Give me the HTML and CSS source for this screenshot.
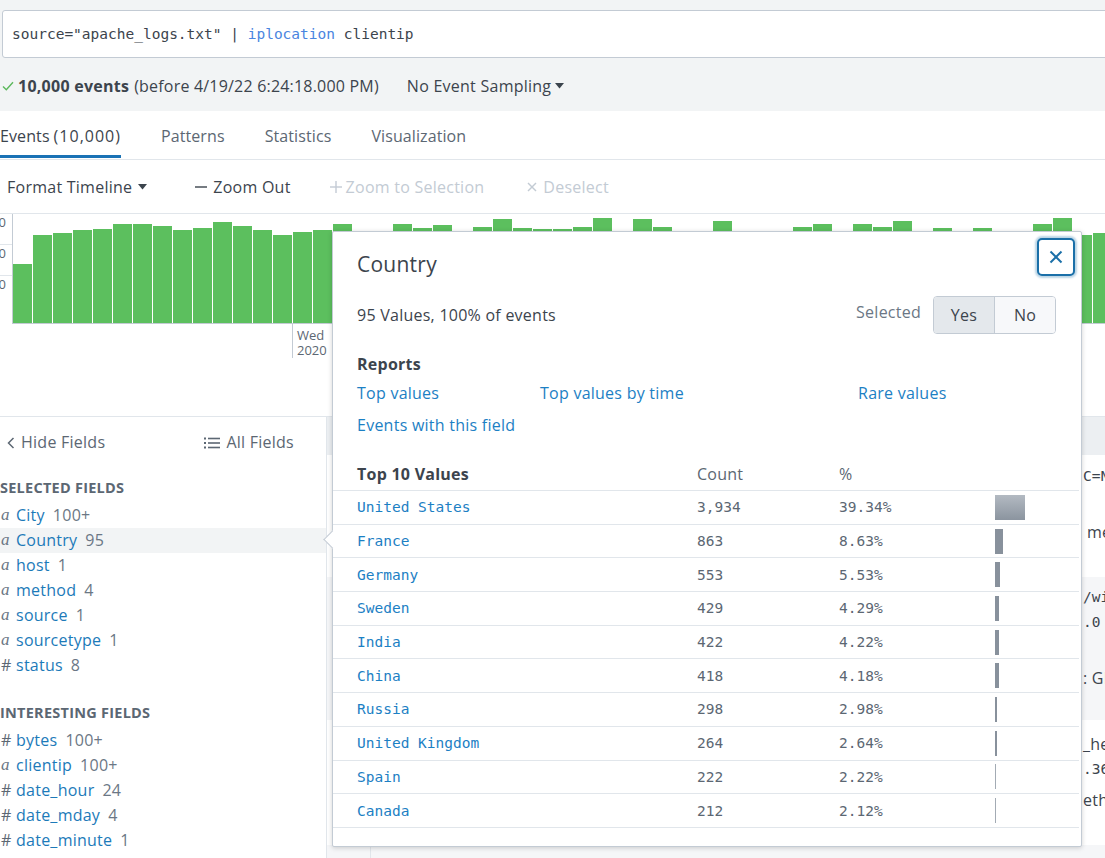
FILE: index.html
```html
<!DOCTYPE html>
<html>
<head>
<meta charset="utf-8">
<title>Search</title>
<link rel="stylesheet" href="styles.css">
</head>
<body>
<div class="top">
  <div class="search"><span>source="apache_logs.txt" | <span class="cmd">iplocation</span> clientip</span></div>
  <div class="status">
    <svg class="check" width="12" height="10" viewBox="0 0 12 10"><polyline points="1,5.5 4.3,8.8 11,1.2" fill="none" stroke="#5cb85c" stroke-width="1.4"/></svg>
    <b class="count">10,000 events</b><span class="before">(before 4/19/22 6:24:18.000 PM)</span>
    <span class="sampling">No Event Sampling <svg class="caret" width="9" height="6" viewBox="0 0 9 6"><polygon points="0,0 9,0 4.5,5.5" fill="#3c444d"/></svg></span>
  </div>
</div>

<div class="tabs">
  <div class="tab active">Events <span class="digits">(10,000)</span></div>
  <div class="tab">Patterns</div>
  <div class="tab">Statistics</div>
  <div class="tab">Visualization</div>
</div>

<div class="toolbar">
  <span class="tool fmt">Format Timeline <svg class="caret" width="9" height="6" viewBox="0 0 9 6"><polygon points="0,0 9,0 4.5,5.5" fill="#3c444d"/></svg></span>
  <span class="tool zoomout"><svg width="12" height="12" viewBox="0 0 12 12"><line x1="0" y1="6" x2="12" y2="6" stroke="#3c444d" stroke-width="1.4"/></svg>Zoom Out</span>
  <span class="tool disabled zoomsel"><svg width="12" height="12" viewBox="0 0 12 12"><line x1="0" y1="6" x2="12" y2="6" stroke="#c3cbd4" stroke-width="1.4"/><line x1="6" y1="0" x2="6" y2="12" stroke="#c3cbd4" stroke-width="1.4"/></svg>Zoom to Selection</span>
  <span class="tool disabled desel"><svg width="10" height="10" viewBox="0 0 10 10"><line x1="1" y1="1" x2="9" y2="9" stroke="#c3cbd4" stroke-width="1.4"/><line x1="9" y1="1" x2="1" y2="9" stroke="#c3cbd4" stroke-width="1.4"/></svg>Deselect</span>
</div>

<div class="timeline">
  <div class="chart">
    <div class="yaxis">
      <div class="ylab first"><span>600</span></div>
      <div class="ylab"><span>400</span></div>
      <div class="ylab"><span>200</span></div>
    </div>
    <div class="plot">
      <div class="bar" style="height:59px"></div><div class="bar" style="height:88px"></div><div class="bar" style="height:90px"></div><div class="bar" style="height:93px"></div><div class="bar" style="height:94px"></div><div class="bar" style="height:99px"></div><div class="bar" style="height:99px"></div><div class="bar" style="height:97px"></div><div class="bar" style="height:93px"></div><div class="bar" style="height:95px"></div><div class="bar" style="height:101px"></div><div class="bar" style="height:97px"></div><div class="bar" style="height:93px"></div><div class="bar" style="height:88px"></div><div class="bar" style="height:91px"></div><div class="bar" style="height:93px"></div><div class="bar" style="height:99px"></div><div class="bar" style="height:88px"></div><div class="bar" style="height:90px"></div><div class="bar" style="height:99px"></div><div class="bar" style="height:95px"></div><div class="bar" style="height:98px"></div><div class="bar" style="height:90px"></div><div class="bar" style="height:96px"></div><div class="bar" style="height:104px"></div><div class="bar" style="height:95px"></div><div class="bar" style="height:94px"></div><div class="bar" style="height:94px"></div><div class="bar" style="height:96px"></div><div class="bar" style="height:105px"></div><div class="bar" style="height:90px"></div><div class="bar" style="height:104px"></div><div class="bar" style="height:96px"></div><div class="bar" style="height:90px"></div><div class="bar" style="height:91px"></div><div class="bar" style="height:102px"></div><div class="bar" style="height:90px"></div><div class="bar" style="height:89px"></div><div class="bar" style="height:91px"></div><div class="bar" style="height:96px"></div><div class="bar" style="height:99px"></div><div class="bar" style="height:90px"></div><div class="bar" style="height:99px"></div><div class="bar" style="height:96px"></div><div class="bar" style="height:102px"></div><div class="bar" style="height:90px"></div><div class="bar" style="height:95px"></div><div class="bar" style="height:91px"></div><div class="bar" style="height:95px"></div><div class="bar" style="height:89px"></div><div class="bar" style="height:90px"></div><div class="bar" style="height:99px"></div><div class="bar" style="height:105px"></div><div class="bar" style="height:88px"></div><div class="bar" style="height:90px"></div>
    </div>
  </div>
  <div class="xaxis"><div class="xlabel">Wed<br>2020</div></div>
</div>

<div class="main">
  <aside class="sidebar">
    <div class="sb-head">
      <span class="sb-link"><svg width="8" height="12" viewBox="0 0 8 12"><polyline points="6.5,1 1.5,6 6.5,11" fill="none" stroke="#5c6773" stroke-width="1.5"/></svg>Hide Fields</span>
      <span class="sb-link"><svg width="16" height="12" viewBox="0 0 16 12"><rect x="0" y="0.5" width="2" height="2" fill="#5c6773"/><rect x="0" y="5" width="2" height="2" fill="#5c6773"/><rect x="0" y="9.5" width="2" height="2" fill="#5c6773"/><rect x="4" y="0.7" width="12" height="1.6" fill="#5c6773"/><rect x="4" y="5.2" width="12" height="1.6" fill="#5c6773"/><rect x="4" y="9.7" width="12" height="1.6" fill="#5c6773"/></svg>All Fields</span>
    </div>
    <div class="sb-title">SELECTED FIELDS</div>
    <div class="field"><span class="ftype">a</span><span class="fname">City</span><span class="fcount">100+</span></div>
    <div class="field active"><span class="ftype">a</span><span class="fname">Country</span><span class="fcount">95</span></div>
    <div class="field"><span class="ftype">a</span><span class="fname">host</span><span class="fcount">1</span></div>
    <div class="field"><span class="ftype">a</span><span class="fname">method</span><span class="fcount">4</span></div>
    <div class="field"><span class="ftype">a</span><span class="fname">source</span><span class="fcount">1</span></div>
    <div class="field"><span class="ftype">a</span><span class="fname">sourcetype</span><span class="fcount">1</span></div>
    <div class="field"><span class="ftype num">#</span><span class="fname">status</span><span class="fcount">8</span></div>
    <div class="sb-title second">INTERESTING FIELDS</div>
    <div class="field"><span class="ftype num">#</span><span class="fname">bytes</span><span class="fcount">100+</span></div>
    <div class="field"><span class="ftype">a</span><span class="fname">clientip</span><span class="fcount">100+</span></div>
    <div class="field"><span class="ftype num">#</span><span class="fname">date_hour</span><span class="fcount">24</span></div>
    <div class="field"><span class="ftype num">#</span><span class="fname">date_mday</span><span class="fcount">4</span></div>
    <div class="field"><span class="ftype num">#</span><span class="fname">date_minute</span><span class="fcount">1</span></div>
  </aside>
  <section class="events">
    <div class="ev-head"></div>
    <div class="evrow r1"><div class="evidx"></div><div class="evbody"><div class="evline mono">C=Nav&amp;PD=2</div><div class="evline gap31 indent">method = GET</div></div></div>
    <div class="evrow r2 alt"><div class="evidx"></div><div class="evbody"><div class="evline mono">/wiki/index.php</div><div class="evline mono">.0 (Windows NT)</div><div class="evline gap31">: GET</div></div></div>
    <div class="evrow r3"><div class="evidx"></div><div class="evbody"><div class="evline">_header</div><div class="evline mono">.36 Safari</div><div class="evline gap6">ethernet</div></div></div>
    <div class="evrow r4 alt"><div class="evidx"></div><div class="evbody"></div></div>
  </section>
</div>

<div class="popup">
  <div class="arrow"></div>
  <button class="close"><svg width="14" height="14" viewBox="0 0 14 14"><line x1="1.5" y1="1.5" x2="12.5" y2="12.5" stroke="#1a6fa8" stroke-width="2"/><line x1="12.5" y1="1.5" x2="1.5" y2="12.5" stroke="#1a6fa8" stroke-width="2"/></svg></button>
  <div class="pop-title">Country</div>
  <div class="pop-meta">
    <span>95 Values, 100% of events</span>
    <span class="selected"><span class="sel-label">Selected</span><span class="toggle"><span class="tbtn on">Yes</span><span class="tbtn">No</span></span></span>
  </div>
  <div class="reports-title">Reports</div>
  <div class="reports">
    <span class="link">Top values</span><span class="link">Top values by time</span><span class="link">Rare values</span>
    <span class="link">Events with this field</span>
  </div>
  <div class="vtable">
    <div class="trow thead"><span class="c1">Top 10 Values</span><span class="c2">Count</span><span class="c3">%</span><span></span></div>
    <div class="trow"><span class="c1 val">United States</span><span class="c2 num">3,934</span><span class="c3 num">39.34%</span><span class="c4"><span class="pbar wide" style="width:30px"></span></span></div>
    <div class="trow"><span class="c1 val">France</span><span class="c2 num">863</span><span class="c3 num">8.63%</span><span class="c4"><span class="pbar" style="width:8px"></span></span></div>
    <div class="trow"><span class="c1 val">Germany</span><span class="c2 num">553</span><span class="c3 num">5.53%</span><span class="c4"><span class="pbar" style="width:5px"></span></span></div>
    <div class="trow"><span class="c1 val">Sweden</span><span class="c2 num">429</span><span class="c3 num">4.29%</span><span class="c4"><span class="pbar" style="width:4px"></span></span></div>
    <div class="trow"><span class="c1 val">India</span><span class="c2 num">422</span><span class="c3 num">4.22%</span><span class="c4"><span class="pbar" style="width:4px"></span></span></div>
    <div class="trow"><span class="c1 val">China</span><span class="c2 num">418</span><span class="c3 num">4.18%</span><span class="c4"><span class="pbar" style="width:4px"></span></span></div>
    <div class="trow"><span class="c1 val">Russia</span><span class="c2 num">298</span><span class="c3 num">2.98%</span><span class="c4"><span class="pbar" style="width:2px"></span></span></div>
    <div class="trow"><span class="c1 val">United Kingdom</span><span class="c2 num">264</span><span class="c3 num">2.64%</span><span class="c4"><span class="pbar" style="width:2px"></span></span></div>
    <div class="trow"><span class="c1 val">Spain</span><span class="c2 num">222</span><span class="c3 num">2.22%</span><span class="c4"><span class="pbar thin" style="width:1px"></span></span></div>
    <div class="trow"><span class="c1 val">Canada</span><span class="c2 num">212</span><span class="c3 num">2.12%</span><span class="c4"><span class="pbar thin" style="width:1px"></span></span></div>
  </div>
</div>
</body>
</html>
```

FILE: styles.css
```css
* { box-sizing: border-box; }
html, body { overflow: hidden; }
body {
  margin: 0;
  width: 1105px;
  height: 858px;
  position: relative;
  font-family: "Open Sans", "Noto Sans", sans-serif;
  font-size: 16px;
  letter-spacing: 0.25px;
  color: #3c444d;
  background: #fff;
}

/* top search area */
.top {
  background: #f2f4f5;
  height: 111px;
  padding: 10px 0 0 2px;
}
.search {
  height: 48px;
  margin-right: -6px;
  background: #fff;
  border: 1px solid #c3cbd4;
  border-radius: 3px;
  display: flex;
  align-items: center;
  padding-left: 9px;
  font-family: "DejaVu Sans Mono", "Liberation Mono", monospace;
  font-size: 14.5px;
  letter-spacing: 0;
  color: #3c444d;
  white-space: nowrap;
}
.cmd { color: #4a85e0; }

.status {
  height: 53px;
  margin-left: -2px;
  display: flex;
  align-items: center;
  padding-top: 2px;
  white-space: nowrap;
}
.check { margin: 0 4px 0 2px; }
.count { font-weight: 700; margin-right: 5px; }
.before { letter-spacing: 0.2px; }
.sampling { margin-left: 28px; display: inline-flex; align-items: center; gap: 4px; }
.caret { margin-top: 1px; }

/* tabs */
.tabs {
  display: flex;
  gap: 40px;
  height: 49px;
  border-bottom: 1px solid #e1e6eb;
  align-items: flex-start;
  letter-spacing: 0.1px;
}
.tab {
  height: 47px;
  padding-top: 6px;
  display: flex;
  align-items: center;
  border-bottom: 3px solid transparent;
  color: #5c6773;
  white-space: nowrap;
}
.tab.active { border-bottom-color: #1a72b5; color: #3c444d; gap: 4px; }
.digits { letter-spacing: 1px; }

/* timeline toolbar */
.toolbar {
  height: 53px;
  display: flex;
  align-items: center;
  padding-left: 7px;
  white-space: nowrap;
}
.tool { display: inline-flex; align-items: center; gap: 6px; }
.tool.fmt { margin-right: 48px; }
.tool.zoomout { margin-right: 39px; }
.tool.zoomsel { gap: 4px; margin-right: 43px; }
.tool.desel { gap: 6px; }
.tool.disabled { color: #c3cbd4; }

/* chart */
.timeline { height: 203px; }
.chart {
  height: 111px;
  display: flex;
  border-top: 1px solid #e1e6eb;
}
.yaxis {
  width: 12px;
  overflow: hidden;
  display: flex;
  flex-direction: column;
}
.ylab {
  height: 31px;
  border-top: 1px solid #e1e6eb;
  font-size: 13px;
  line-height: 16px;
  display: flex;
  justify-content: flex-end;
  padding-right: 6px;
  color: #5c6773;
  white-space: nowrap;
  letter-spacing: 0;
}
.ylab span { flex: none; }
.ylab.first { height: 30px; border-top: none; }
.plot {
  flex: 1;
  display: flex;
  align-items: flex-end;
  gap: 1px;
  border-left: 1px solid #c3cbd4;
  border-bottom: 1px solid #c3cbd4;
  overflow: hidden;
}
.bar { flex: 0 0 19px; background: #5cbf5e; }
.xaxis { height: 92px; }
.xlabel {
  margin-left: 292px;
  width: 60px;
  border-left: 1px solid #c3cbd4;
  padding: 4px 0 0 4px;
  font-size: 13px;
  line-height: 15px;
  letter-spacing: 0;
  color: #5c6773;
}

/* main area */
.main {
  display: flex;
  border-top: 1px solid #e1e6eb;
  height: 442px;
}
.sidebar {
  width: 327px;
  flex: 0 0 327px;
  border-right: 1px solid #e1e6eb;
}
.sb-head {
  height: 50px;
  display: flex;
  align-items: center;
  justify-content: space-between;
  padding: 0 32px 0 7px;
  color: #5c6773;
}
.sb-link { display: inline-flex; align-items: center; gap: 6px; }
.sb-link svg { margin-top: 1px; }
.sb-title {
  font-size: 14.5px;
  font-weight: 700;
  line-height: 20px;
  color: #5c6773;
  margin: 11px 0 4.5px 0;
}
.sb-title.second { margin-top: 25.5px; }
.field {
  height: 25px;
  display: flex;
  align-items: center;
  padding-left: 1px;
  white-space: nowrap;
}
.field.active { background: #f2f4f5; }
.ftype {
  width: 15px;
  font-family: "Liberation Serif", serif;
  font-style: italic;
  font-size: 17px;
  color: #6b7785;
}
.ftype.num { font-family: "Open Sans", sans-serif; font-style: normal; font-size: 16px; }
.fname { color: #1c7ab9; }
.fcount { margin-left: 8px; color: #6b7785; }

.events { flex: 1; }
.ev-head { height: 38px; background: #eceff2; }
.evrow { display: flex; }
.evrow.alt { background: #f5f6f8; }
.evrow.r1 { height: 122px; }
.evrow.r2 { height: 143px; }
.evrow.r3 { height: 125px; }
.evrow.r4 { height: 20px; }
.evidx { width: 44px; flex: 0 0 44px; border-right: 1px solid #e1e6eb; }
.evbody { flex: 1; padding-left: 712px; white-space: nowrap; overflow: hidden; }
.r1 .evbody { padding-top: 8.5px; }
.r2 .evbody { padding-top: 7.5px; }
.r3 .evbody { padding-top: 11.5px; }
.evline { line-height: 25px; height: 25px; color: #3c444d; }
.evline.mono { font-family: "DejaVu Sans Mono", monospace; font-size: 14.5px; letter-spacing: 0; }
.evline.indent { padding-left: 4px; }
.gap31 { margin-top: 31px; }
.gap6 { margin-top: 6px; }

/* popup */
.popup {
  position: absolute;
  left: 332px;
  top: 231px;
  width: 750px;
  height: 616px;
  background: #fff;
  border: 1px solid #c3cbd4;
  border-radius: 2px;
  box-shadow: 0 1px 5px rgba(0, 0, 0, 0.18);
  padding: 18px 25px 0 24px;
  z-index: 5;
}
.arrow {
  position: absolute;
  left: -7.5px;
  top: 301px;
  width: 13px;
  height: 13px;
  background: #fff;
  border-left: 1px solid #c3cbd4;
  border-bottom: 1px solid #c3cbd4;
  transform: rotate(45deg);
}
.close {
  position: absolute;
  top: 6px;
  right: 6px;
  width: 38px;
  height: 38px;
  border: 2px solid #1a6fa8;
  border-radius: 5px;
  background: #fff;
  box-shadow: 0 0 2px 2px rgba(26, 111, 168, 0.3);
  display: flex;
  align-items: center;
  justify-content: center;
  padding: 0;
}
.pop-title { font-size: 21px; line-height: 28px; }
.pop-meta {
  margin-top: 18px;
  height: 38px;
  display: flex;
  align-items: center;
  justify-content: space-between;
}
.selected { display: flex; align-items: center; gap: 12px; }
.sel-label { color: #6b7785; margin-bottom: 7px; }
.toggle {
  display: flex;
  height: 38px;
  border: 1px solid #c3cbd4;
  border-radius: 4px;
  overflow: hidden;
}
.tbtn {
  width: 60px;
  display: flex;
  align-items: center;
  justify-content: center;
  background: #f7f8fa;
  color: #3c444d;
}
.tbtn.on { width: 61px; background: #e4e8ec; border-right: 1px solid #c3cbd4; }
.reports-title { margin-top: 20px; font-weight: 700; line-height: 20px; }
.reports {
  margin-top: 9px;
  display: grid;
  grid-template-columns: 183px 318px 1fr;
  row-gap: 12px;
  line-height: 20px;
}
.link { color: #1c80c4; }

.vtable { margin: 22px -23px 0 -24px; }
.trow {
  display: grid;
  grid-template-columns: 364px 142px 156px 1fr;
  align-items: center;
  height: 33.7px;
  border-bottom: 1px solid #e1e6eb;
  white-space: nowrap;
}
.trow.thead { height: 34px; }
.thead .c1 { font-weight: 700; color: #3c444d; }
.thead .c2, .thead .c3 { color: #5c6773; }
.c1 { padding-left: 24px; }
.val { font-family: "DejaVu Sans Mono", monospace; font-size: 14.5px; letter-spacing: 0; color: #1c80c4; }
.num { font-family: "DejaVu Sans Mono", monospace; font-size: 14.5px; letter-spacing: 0; color: #5c6773; }
.c4 { display: flex; align-items: center; }
.pbar { display: block; height: 25px; background: #88919c; }
.pbar.wide { background: linear-gradient(#b3bac2, #8b949f); }
.pbar.thin { background: #a3abb4; }
```
